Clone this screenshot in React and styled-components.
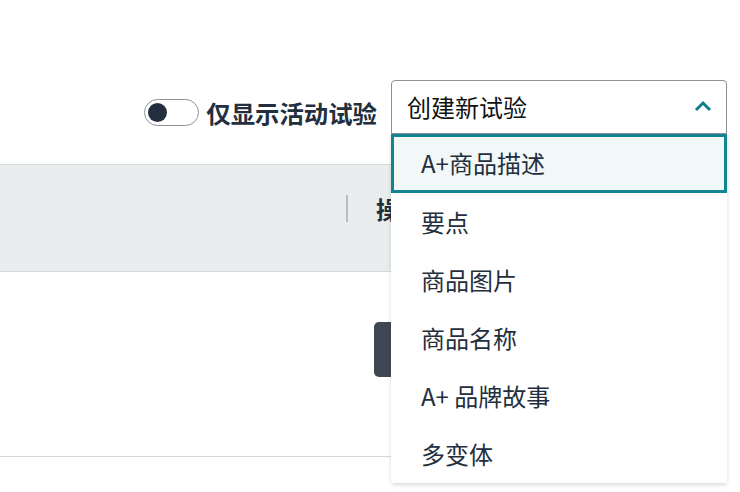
import React from 'react';
import styled, { createGlobalStyle } from 'styled-components';

const GlobalStyle = createGlobalStyle`
  body {
    margin: 0;
    background: #fff;
    font-family: "Noto Sans CJK SC", "Noto Sans", sans-serif;
    color: #232f3e;
  }
`;

const options = ['A+商品描述', '要点', '商品图片', '商品名称', 'A+ 品牌故事', '多变体'];

const App = () => {
  return (
    <Page>
      <GlobalStyle />
      <Toolbar>
        <ToggleLabel>
          <Toggle>
            <Knob />
          </Toggle>
          仅显示活动试验
        </ToggleLabel>
        <SelectWrap>
          <SelectBox>
            <span>创建新试验</span>
            <svg width="18" height="12" viewBox="0 0 18 12">
              <path d="M2 10 L9 3 L16 10" fill="none" stroke="#0f7f8c" strokeWidth="3" />
            </svg>
          </SelectBox>
          <Menu>
            {options.map((o, i) => (
              <MenuItem key={o} active={i === 0}>{o}</MenuItem>
            ))}
          </Menu>
        </SelectWrap>
      </Toolbar>
      <Table>
        <HeaderRow>
          <Divider />
          <HeaderCell>操作</HeaderCell>
        </HeaderRow>
        <BodyRow>
          <ActionButton aria-label="操作" />
        </BodyRow>
      </Table>
    </Page>
  );
};

const Page = styled.div`
  width: 740px;
  height: 492px;
  overflow: hidden;
`;

const Toolbar = styled.div`
  display: flex;
  justify-content: flex-end;
  align-items: center;
  gap: 14px;
  padding: 80px 13px 0 0;
`;

const ToggleLabel = styled.label`
  display: flex;
  align-items: center;
  gap: 7px;
  font-size: 24.4px;
  font-weight: 700;
  margin-top: 10px;
`;

const Toggle = styled.span`
  box-sizing: border-box;
  width: 55px;
  height: 27px;
  border: 1px solid #8d9096;
  border-radius: 14px;
  display: flex;
  align-items: center;
  padding-left: 3px;
  margin-top: 0;
`;

const Knob = styled.span`
  width: 19px;
  height: 19px;
  border-radius: 50%;
  background: #232f3e;
`;

const SelectWrap = styled.div`
  position: relative;
  width: 336px;
`;

const SelectBox = styled.div`
  box-sizing: border-box;
  height: 54px;
  border: 1px solid #8d9096;
  border-radius: 4px 4px 0 0;
  display: flex;
  align-items: center;
  justify-content: space-between;
  padding: 0 14px 2px 15px;
  font-size: 24px;
  font-weight: 400;
  color: #0f1111;
`;

const Menu = styled.ul`
  position: absolute;
  top: 54px;
  left: 0;
  right: 0;
  margin: 0;
  padding: 0;
  list-style: none;
  background: #fff;
  box-shadow: 0 2px 4px rgba(0, 0, 0, 0.15);
  border-radius: 0 0 4px 4px;
  z-index: 2;
`;

const MenuItem = styled.li`
  box-sizing: border-box;
  height: ${p => (p.active ? 59 : 58)}px;
  display: flex;
  align-items: center;
  padding-left: ${p => (p.active ? 27 : 30)}px;
  padding-bottom: 2px;
  font-size: 24px;
  font-weight: 400;
  color: #232f3e;
  background: ${p => (p.active ? '#f2f7f8' : '#fff')};
  border: ${p => (p.active ? '3px solid #138491' : 'none')};
`;

const Table = styled.div`
  margin-top: 30px;
  width: 727px;
`;

const HeaderRow = styled.div`
  box-sizing: border-box;
  height: 108px;
  background: #eaeded;
  border-top: 1px solid #d5d9d9;
  border-bottom: 1px solid #d5d9d9;
  display: flex;
  align-items: center;
  padding-left: 346px;
  padding-bottom: 20px;
`;

const Divider = styled.span`
  width: 2px;
  height: 27px;
  background: #b9bcbd;
`;

const HeaderCell = styled.span`
  margin-left: 28px;
  font-size: 24px;
  font-weight: 700;
`;

const BodyRow = styled.div`
  box-sizing: border-box;
  height: 185px;
  border-bottom: 1px solid #d5d9d9;
  padding: 50px 0 0 374px;
`;

const ActionButton = styled.button`
  display: block;
  width: 90px;
  height: 55px;
  border: none;
  border-radius: 5px;
  background: #3f4753;
`;

export default App;
